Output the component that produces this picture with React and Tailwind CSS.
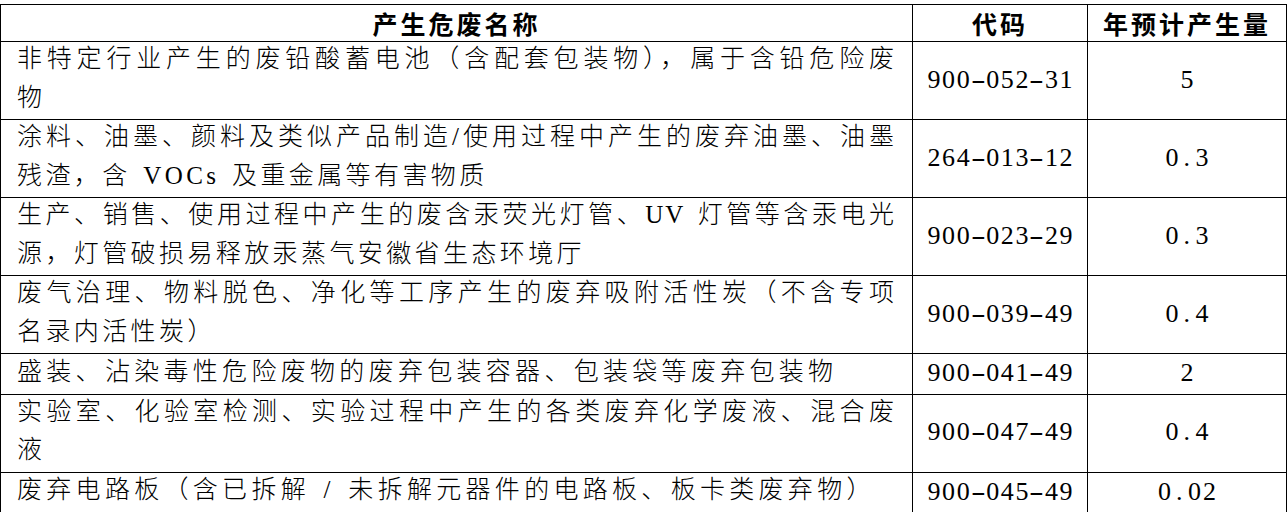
import React from 'react';

const rows = [
  {
    name: ['非特定行业产生的废铅酸蓄电池（含配套包装物），属于含铅危险废', '物'],
    code: '900-052-31',
    qty: '5',
  },
  {
    name: ['涂料、油墨、颜料及类似产品制造/使用过程中产生的废弃油墨、油墨', '残渣，含 VOCs 及重金属等有害物质'],
    code: '264-013-12',
    qty: '0.3',
  },
  {
    name: ['生产、销售、使用过程中产生的废含汞荧光灯管、UV 灯管等含汞电光', '源，灯管破损易释放汞蒸气安徽省生态环境厅'],
    code: '900-023-29',
    qty: '0.3',
  },
  {
    name: ['废气治理、物料脱色、净化等工序产生的废弃吸附活性炭（不含专项', '名录内活性炭）'],
    code: '900-039-49',
    qty: '0.4',
  },
  {
    name: ['盛装、沾染毒性危险废物的废弃包装容器、包装袋等废弃包装物'],
    code: '900-041-49',
    qty: '2',
  },
  {
    name: ['实验室、化验室检测、实验过程中产生的各类废弃化学废液、混合废', '液'],
    code: '900-047-49',
    qty: '0.4',
  },
  {
    name: ['废弃电路板（含已拆解 / 未拆解元器件的电路板、板卡类废弃物）'],
    code: '900-045-49',
    qty: '0.02',
  },
];

// half-width cells, like the document's fixed-pitch digits
function Num({ text, wide }) {
  return (
    <span className="inline-flex font-['Liberation_Serif',serif] text-[26px]">
      {[...text].map((c, i) => (
        <span
          key={i}
          className={
            c === '.'
              ? 'w-[15px] text-left pl-[4px]'
              : wide
              ? 'w-[15px] text-center'
              : 'w-[14.7px] text-center'
          }
        >
          {c === '-' ? <span className="inline-block scale-x-[1.7]">-</span> : c}
        </span>
      ))}
    </span>
  );
}

export default function App() {
  return (
    <div className="bg-white pt-[4px] text-black">
      <table className="w-[1286px] table-fixed border-collapse font-['Noto_Sans_CJK_SC',sans-serif]">
        <colgroup>
          <col className="w-[912px]" />
          <col className="w-[175px]" />
          <col className="w-[199px]" />
        </colgroup>
        <thead>
          <tr>
            <th className="border border-black p-0 text-center text-[25px] font-bold leading-[36px] tracking-[3px]">产生危废名称</th>
            <th className="border border-black p-0 text-center text-[25px] font-bold leading-[36px] tracking-[3px]">代码</th>
            <th className="border border-black p-0 text-center text-[25px] font-bold leading-[36px] tracking-[3px]">年预计产生量</th>
          </tr>
        </thead>
        <tbody>
          {rows.map((r) => (
            <tr key={r.code}>
              <td className="border border-black py-0 pl-[16px] pr-[16px] align-middle font-['Liberation_Serif','Noto_Sans_CJK_SC',serif] text-[25px] font-light leading-[38.5px] [word-spacing:3px]">
                <div className="-translate-y-[2px]">
                  {r.name.map((line, i) =>
                    i < r.name.length - 1 ? (
                      <div key={i} className="text-justify tracking-[2px] [text-align-last:justify]">
                        {line}
                      </div>
                    ) : (
                      <div
                        key={i}
                        className={r.name.length === 1 ? 'text-left tracking-[4.3px]' : 'text-left tracking-[3.4px]'}
                      >
                        {line}
                      </div>
                    )
                  )}
                </div>
              </td>
              <td className="border border-black p-0 text-center align-middle leading-[38.5px]">
                <Num text={r.code} />
              </td>
              <td className="border border-black p-0 text-center align-middle leading-[38.5px]">
                <Num text={r.qty} wide />
              </td>
            </tr>
          ))}
        </tbody>
      </table>
    </div>
  );
}
